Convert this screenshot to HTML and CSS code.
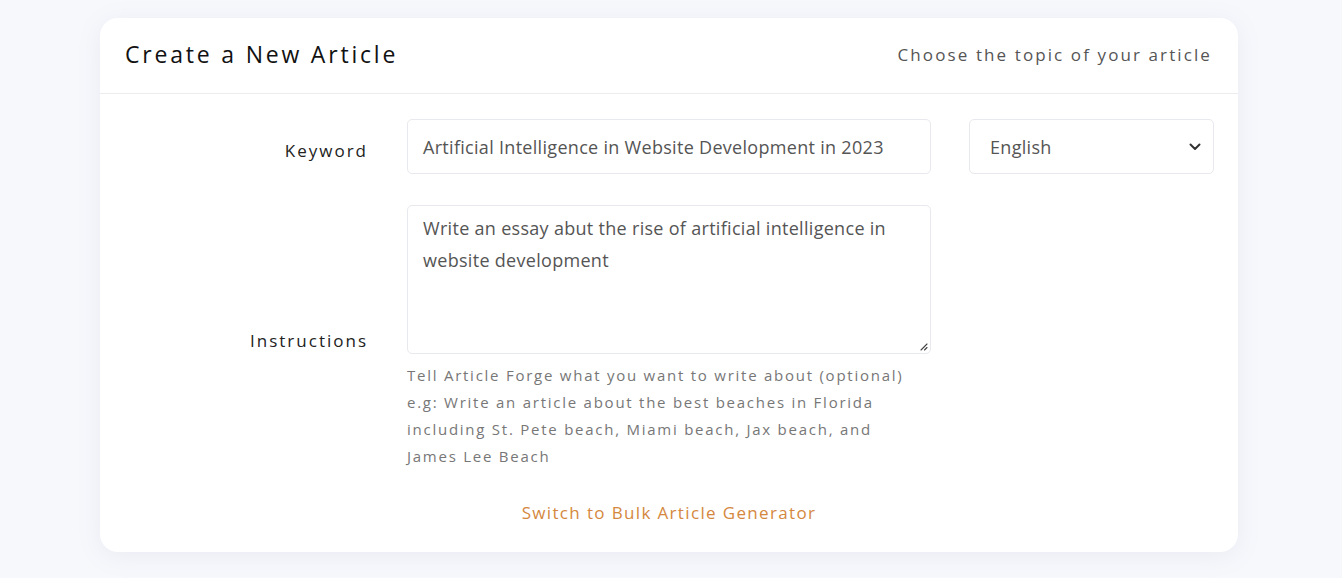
FILE: index.html
```html
<!DOCTYPE html>
<html lang="en">
<head>
<meta charset="utf-8">
<title>Create a New Article</title>
<link rel="stylesheet" href="styles.css">
</head>
<body>
<main class="page">
  <section class="card">
    <header class="card-head">
      <h1 class="title">Create a New Article</h1>
      <p class="subtitle">Choose the topic of your article</p>
    </header>
    <div class="card-body">
      <div class="form-grid">
        <label class="label label-keyword" for="kw">Keyword</label>
        <div class="field input-box" id="kw">Artificial Intelligence in Website Development in 2023</div>
        <div class="field select-box">
          <span>English</span>
          <svg class="chev" width="12" height="8" viewBox="0 0 12 8"><path d="M1.5 1.5 L6 6 L10.5 1.5" fill="none" stroke="#333" stroke-width="2" stroke-linecap="round" stroke-linejoin="round"/></svg>
        </div>

        <label class="label label-instr">Instructions</label>
        <div class="instr-col">
          <div class="field textarea-box">
            <p class="ta-text">Write an essay abut the rise of artificial intelligence in website development</p>
            <svg class="grip" width="9" height="9" viewBox="0 0 9 9"><path d="M8 2 L2 8 M8 5.5 L5.5 8" stroke="#444" stroke-width="1.1" stroke-linecap="round"/></svg>
          </div>
          <p class="help">Tell Article Forge what you want to write about (optional) e.g: Write an article about the best beaches in Florida including St. Pete beach, Miami beach, Jax beach, and James Lee Beach</p>
        </div>
        <div></div>
      </div>
      <div class="switch-row"><a class="switch" href="#">Switch to Bulk Article Generator</a></div>
    </div>
  </section>
</main>
</body>
</html>
```

FILE: styles.css
```css
* { box-sizing: border-box; }
html, body { margin: 0; padding: 0; }
body {
  background: #f7f8fc;
  font-family: "Open Sans", "Liberation Sans", sans-serif;
  color: #222;
}
.page {
  padding: 18px 104px 26px 100px;
}
.card {
  background: #fff;
  border-radius: 18px;
  box-shadow: 0 4px 24px rgba(120, 130, 170, 0.10);
  height: 534px;
}
.card-head {
  height: 76px;
  border-bottom: 1px solid #ececf0;
  padding: 0 26px 3px 25px;
  display: flex;
  align-items: center;
  justify-content: space-between;
}
.title {
  margin: 0;
  font-size: 23px;
  font-weight: 500;
  letter-spacing: 2.8px;
  color: #111;
}
.subtitle {
  margin: 0;
  font-size: 17px;
  letter-spacing: 2.1px;
  color: #555;
}
.card-body {
  padding: 25px 25px 0 25px;
}
.form-grid {
  display: grid;
  grid-template-columns: 243px 524px 244px;
  column-gap: 39px;
  row-gap: 31px;
}
.form-grid > :nth-child(3) { margin-left: -1px; }
.label {
  justify-self: end;
  font-size: 17px;
  letter-spacing: 2px;
  color: #222;
}
.label-keyword {
  align-self: center;
  padding-top: 8px;
}
.label-instr {
  align-self: start;
  padding-top: 124px;
}
.field {
  border: 1px solid #e8e9ee;
  border-radius: 5px;
  background: #fff;
  color: #555;
  font-size: 18px;
  letter-spacing: 0.3px;
}
.input-box {
  height: 55px;
  padding: 0 15px;
  display: flex;
  align-items: center;
  white-space: nowrap;
}
.select-box {
  height: 55px;
  padding: 0 12px 0 20px;
  display: flex;
  align-items: center;
  justify-content: space-between;
}
.instr-col {
  display: flex;
  flex-direction: column;
}
.textarea-box {
  position: relative;
  height: 149px;
  padding: 6px 15px;
}
.ta-text {
  margin: 0;
  line-height: 32px;
}
.grip {
  position: absolute;
  right: 2px;
  bottom: 2px;
}
.help {
  margin: 8px 0 0 0;
  padding-right: 22px;
  font-size: 15px;
  line-height: 27px;
  letter-spacing: 1.75px;
  color: #777;
}
.switch-row {
  display: flex;
  justify-content: center;
  margin-top: 31px;
}
.switch {
  color: #d4883e;
  text-decoration: none;
  font-size: 17px;
  letter-spacing: 1.35px;
}
```
